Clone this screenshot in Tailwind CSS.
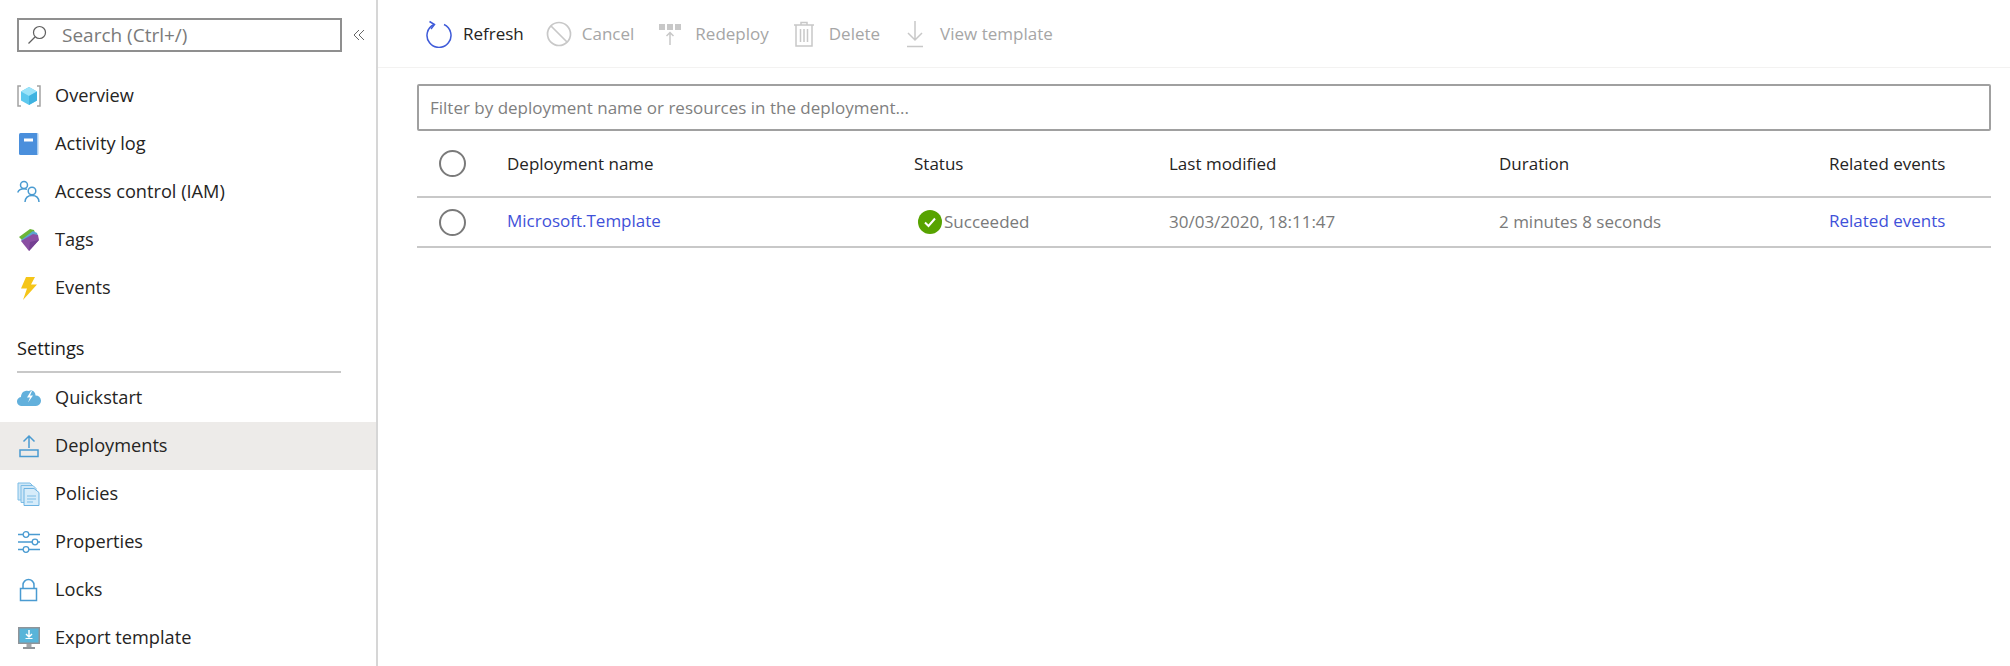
<!DOCTYPE html>
<html lang="en">
<head>
  <meta charset="UTF-8" />
  <title>Deployments</title>
  <script src="https://cdn.jsdelivr.net/npm/@tailwindcss/browser@4"></script>
</head>
<body class="bg-white font-['Open_Sans',sans-serif] text-[18.2px] text-[#252423] overflow-hidden">
<div class="flex h-[666px]">

  <!-- sidebar -->
  <aside class="w-[378px] shrink-0 border-r-2 border-[#d6d6d6] overflow-hidden">
    <div class="flex items-center pl-[17px] pt-[18px]">
      <div class="w-[325px] h-[34px] border-2 border-[#8f8f8f] flex items-center pl-[8px] text-[#7a7a7a]">
        <svg class="w-[20px] h-[20px]" viewBox="0 0 20 20" fill="none" stroke="#5f5f5f" stroke-width="1.2"><circle cx="12.5" cy="7.5" r="6"/><path d="M8 12 1.5 18.5"/></svg>
        <span class="ml-[15px] text-[19px]">Search (Ctrl+/)</span>
      </div>
      <svg class="ml-[11px] w-[12px] h-[12px]" viewBox="0 0 12 12" fill="none" stroke="#666" stroke-width="1"><path d="M6 1 1 6l5 5M11 1 6 6l5 5"/></svg>
    </div>

    <nav class="mt-[20px]">
      <div class="h-[48px] flex items-center pl-[17px]">
        <svg class="w-[24px] h-[24px]" viewBox="0 0 24 24"><path d="M4 2H1v20h3M20 2h3v20h-3" fill="none" stroke="#a3a3a3" stroke-width="1.5"/><path d="M12 3l8 4.5v9L12 21l-8-4.5v-9z" fill="#5dc8ee"/><path d="M12 12l8-4.500L12 3 4 7.500z" fill="#9be3f9"/><path d="M12 12v9l8-4.500v-9z" fill="#3eb2e0"/></svg>
        <span class="ml-[14px]">Overview</span>
      </div>
      <div class="h-[48px] flex items-center pl-[17px]">
        <svg class="w-[24px] h-[24px]" viewBox="0 0 24 24"><rect x="2" y="1" width="19" height="22" rx="1.5" fill="#4a8fdc"/><path d="M20 1.5h1.5v21H20z" fill="#a9cdf0"/><rect x="7" y="6.5" width="9" height="3" fill="#fff"/></svg>
        <span class="ml-[14px]">Activity log</span>
      </div>
      <div class="h-[48px] flex items-center pl-[17px]">
        <svg class="w-[24px] h-[24px]" viewBox="0 0 24 24" fill="none" stroke="#4a9bd1" stroke-width="1.5"><circle cx="7" cy="5" r="3.500"/><path d="M.7 12.5C2 9.5 4 8.800 7 8.800c1.200 0 2.200.2 3 .6"/><circle cx="15" cy="11" r="3.800"/><path d="M8 22c.3-4 3-6.500 7-6.500s6.800 2.500 7 6.500"/></svg>
        <span class="ml-[14px]">Access control (IAM)</span>
      </div>
      <div class="h-[48px] flex items-center pl-[17px]">
        <svg class="w-[24px] h-[24px]" viewBox="0 0 24 24"><path d="M2 9 13 1l4 1 1 3L6 13z" fill="#6bb536"/><path d="M4 12 16 3l4 2 1 3L9 18z" fill="#5aa5cf"/><path d="M4 13 16 6l5 1 1 5-10 11z" fill="#8a4fa3"/><path d="M13 14 22 12 12 23z" fill="#743f92"/></svg>
        <span class="ml-[14px]">Tags</span>
      </div>
      <div class="h-[48px] flex items-center pl-[17px]">
        <svg class="w-[24px] h-[24px]" viewBox="0 0 24 24"><path d="M9 1h9l-4 7.500h6L6 24l4-11.500H4z" fill="#f5c518"/></svg>
        <span class="ml-[14px]">Events</span>
      </div>
    </nav>

    <div class="ml-[17px] mr-[35px] mt-[24px] h-[37px] border-b-2 border-[#c8c8c8] font-medium text-[#1b1a19] leading-[24px]">Settings</div>

    <nav class="mt-[1px]">
      <div class="h-[48px] flex items-center pl-[17px]">
        <svg class="w-[24px] h-[24px]" viewBox="0 0 24 24"><path d="M5 20a4.500 4.500 0 0 1-1-9 6 6 0 0 1 8-6c3.500-1.500 6.500 1 6.500 4.500A5 5 0 0 1 19 20z" fill="#62b0dc"/><path d="M14 5l-4 6.500h3l-2 5 5-7h-3l2-4.500z" fill="#fff"/></svg>
        <span class="ml-[14px]">Quickstart</span>
      </div>
      <div class="h-[48px] flex items-center pl-[17px] bg-[#edebe9]">
        <svg class="w-[24px] h-[24px]" viewBox="0 0 24 24" fill="none" stroke="#4a9bd1" stroke-width="1.5"><rect x="3" y="16" width="18" height="6.500"/><path d="M12 14V2M6.500 7.500 12 2l5.500 5.500"/></svg>
        <span class="ml-[14px]">Deployments</span>
      </div>
      <div class="h-[48px] flex items-center pl-[17px]">
        <svg class="w-[24px] h-[24px]" viewBox="0 0 24 24"><path d="M1 1h12l3 3v14H1z" fill="#cfe7f7" stroke="#7dbde6"/><path d="M4 3.500h12l3 3v14H4z" fill="#cfe7f7" stroke="#7dbde6"/><path d="M7 6.500h10l5 4v13H7z" fill="#d6ecfa" stroke="#6db3e2"/><path d="M10 14h9M10 17h9M10 20h6" stroke="#7dbde6"/></svg>
        <span class="ml-[14px]">Policies</span>
      </div>
      <div class="h-[48px] flex items-center pl-[17px]">
        <svg class="w-[24px] h-[24px]" viewBox="0 0 24 24" fill="none" stroke="#4a9bd1" stroke-width="1.300"><path d="M1 4.500h5M12 4.500h11M1 12h14M21 12h2M1 19.500h5M12 19.500h11"/><circle cx="9" cy="4.500" r="2.800"/><circle cx="18" cy="12" r="2.800"/><circle cx="9" cy="19.500" r="2.800"/></svg>
        <span class="ml-[14px]">Properties</span>
      </div>
      <div class="h-[48px] flex items-center pl-[17px]">
        <svg class="w-[24px] h-[24px]" viewBox="0 0 24 24" fill="none" stroke="#4a9bd1" stroke-width="1.500"><rect x="3.500" y="10.500" width="16" height="12"/><path d="M6 10.500V7a5.500 5.500 0 0 1 11 0v3.500"/></svg>
        <span class="ml-[14px]">Locks</span>
      </div>
      <div class="h-[48px] flex items-center pl-[17px]">
        <svg class="w-[24px] h-[24px]" viewBox="0 0 24 24"><rect x="1" y="1" width="22" height="17" fill="#8f9499"/><rect x="2.500" y="2.500" width="19" height="14" fill="#59b4d9"/><path d="M12 4v6M9 8l3 3 3-3" fill="none" stroke="#fff" stroke-width="1.500"/><path d="M8.500 12.500h7" stroke="#fff"/><path d="M9.500 18h5v3h-5z" fill="#a0a5a9"/><path d="M6 21h12v2H6z" fill="#8f9499"/></svg>
        <span class="ml-[14px]">Export template</span>
      </div>
    </nav>
  </aside>

  <!-- main -->
  <main class="flex-1 min-w-0 text-[17px]">
    <div class="h-[68px] border-b border-[#f3f2f1] flex items-center text-[#a6a6a6]">
      <div class="flex items-center ml-[48px] text-[#252423]">
        <svg class="w-[26px] h-[28px]" viewBox="0 0 26 28" fill="none" stroke="#3f5bd9" stroke-width="1.500"><path d="M8 4.500a12 12 0 1 0 10 0"/><path d="M3.500 1.500 8.500 4.500 5 9" /></svg>
        <span class="ml-[11px]">Refresh</span>
      </div>
      <div class="flex items-center ml-[22px]">
        <svg class="w-[26px] h-[26px]" viewBox="0 0 26 26" fill="none" stroke="#c8c8c8" stroke-width="1.700"><circle cx="13" cy="13" r="11.500"/><path d="M5 5l16 16"/></svg>
        <span class="ml-[10px]">Cancel</span>
      </div>
      <div class="flex items-center ml-[25px]">
        <svg class="w-[22px] h-[24px]" viewBox="0 0 22 24"><path d="M0 2h6v6H0zM8 2h6v6H8zM16 2h6v6h-6z" fill="#c8c8c8"/><path d="M11 11v12M7.500 14 11 10.500l3.500 3.500" fill="none" stroke="#c8c8c8" stroke-width="1.500"/></svg>
        <span class="ml-[14px]">Redeploy</span>
      </div>
      <div class="flex items-center ml-[24px]">
        <svg class="w-[22px] h-[26px]" viewBox="0 0 22 26" fill="none" stroke="#c8c8c8" stroke-width="1.500"><path d="M1 4h20M8 4V1.500h6V4M3 4v21h16V4M7.500 8v13M11 8v13M14.500 8v13"/></svg>
        <span class="ml-[14px]">Delete</span>
      </div>
      <div class="flex items-center ml-[25px]">
        <svg class="w-[20px] h-[28px]" viewBox="0 0 20 28" fill="none" stroke="#c8c8c8" stroke-width="1.500"><path d="M10 1v19M3 13l7 7 7-7M2 26.500h16"/></svg>
        <span class="ml-[15px]">View template</span>
      </div>
    </div>

    <div class="pl-[39px] pr-[19px]">
      <div class="mt-[16px] h-[47px] border-2 border-[#a0a0a0] rounded-[2px] flex items-center pl-[11px] text-[#7f7f7f]">Filter by deployment name or resources in the deployment...</div>

      <div class="grid grid-cols-[90px_407px_255px_330px_330px_1fr] items-center h-[67px] border-b-2 border-[#c8c8c8] text-[#252423]">
        <div class="pl-[22px]"><div class="w-[27px] h-[27px] rounded-full border-2 border-[#7a7a7a]"></div></div>
        <div>Deployment name</div>
        <div>Status</div>
        <div>Last modified</div>
        <div>Duration</div>
        <div>Related events</div>
      </div>

      <div class="grid grid-cols-[90px_407px_255px_330px_330px_1fr] items-center h-[50px] border-b-2 border-[#c8c8c8] text-[#7a7a7a]">
        <div class="pl-[22px]"><div class="w-[27px] h-[27px] rounded-full border-2 border-[#7a7a7a]"></div></div>
        <div class="text-[#3f51d9] -mt-[2px]">Microsoft.Template</div>
        <div class="flex items-center pl-[4px]">
          <svg class="w-[24px] h-[24px]" viewBox="0 0 24 24"><circle cx="12" cy="12" r="12" fill="#57a300"/><path d="M7 12.500l3.500 3.500L17 8.500" fill="none" stroke="#fff" stroke-width="2"/></svg>
          <span class="ml-[2px]">Succeeded</span>
        </div>
        <div>30/03/2020, 18:11:47</div>
        <div>2 minutes 8 seconds</div>
        <div class="text-[#3f51d9] -mt-[2px]">Related events</div>
      </div>
    </div>
  </main>
</div>
</body>
</html>
